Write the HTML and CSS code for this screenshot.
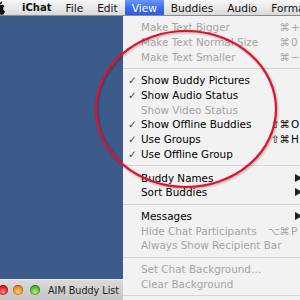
FILE: index.html
```html
<!DOCTYPE html>
<html lang="en">

<head>
    <meta charset="UTF-8">
    <title>iChat View Menu</title>
    <link rel="stylesheet" href="styles.css">
</head>

<body>
    <div class="screen">

        <!-- Menu bar -->
        <div class="menubar">
            <svg class="apple" width="12" height="14" viewBox="0 0 12 14">
                <path d="M10.2 7.5c0-1.6 1.3-2.4 1.4-2.5-.8-1.1-2-1.3-2.4-1.3-1-.1-2 .6-2.5.6s-1.3-.6-2.2-.6C3.4 3.7 2.3 4.4 1.7 5.4.5 7.5 1.4 10.6 2.6 12.3c.6.8 1.2 1.7 2.1 1.7.8 0 1.2-.5 2.2-.5s1.3.5 2.2.5c.9 0 1.5-.8 2-1.7.6-.9.9-1.8.9-1.900 0 0-1.700-.7-1.800-2.900z" fill="#111"/>
                <path d="M8.6 2.6c.5-.6.8-1.3.7-2.1-.7 0-1.4.4-1.9 1-.4.5-.8 1.3-.7 2 .7.1 1.4-.3 1.9-.9z" fill="#111"/>
            </svg>
            <span class="menu-title app">iChat</span>
            <span class="menu-title">File</span>
            <span class="menu-title">Edit</span>
            <span class="menu-title active">View</span>
            <span class="menu-title">Buddies</span>
            <span class="menu-title">Audio</span>
            <span class="menu-title">Format</span>
        </div>

        <div class="desk">
            <!-- Buddy list window behind the menu -->
            <div class="window">
                <div class="buddies"></div>
                <div class="titlebar">
                    <span class="light red"></span>
                    <span class="light orange"></span>
                    <span class="light green"></span>
                    <span class="window-title">AIM Buddy List</span>
                </div>
            </div>

            <!-- View menu -->
            <div class="menu">
                <div class="item off"><span class="check"></span><span class="label">Make Text Bigger</span><span class="mods">⌘</span><span class="key">+</span></div>
                <div class="item off"><span class="check"></span><span class="label">Make Text Normal Size</span><span class="mods">⌘</span><span class="key">0</span></div>
                <div class="item off"><span class="check"></span><span class="label">Make Text Smaller</span><span class="mods">⌘</span><span class="key">−</span></div>
                <div class="sep"></div>
                <div class="item"><span class="check">✓</span><span class="label">Show Buddy Pictures</span></div>
                <div class="item"><span class="check">✓</span><span class="label">Show Audio Status</span></div>
                <div class="item off"><span class="check"></span><span class="label">Show Video Status</span></div>
                <div class="item"><span class="check">✓</span><span class="label">Show Offline Buddies</span><span class="mods">⇧⌘</span><span class="key">O</span></div>
                <div class="item"><span class="check">✓</span><span class="label">Use Groups</span><span class="mods">⇧⌘</span><span class="key">H</span></div>
                <div class="item"><span class="check">✓</span><span class="label">Use Offline Group</span></div>
                <div class="sep"></div>
                <div class="item"><span class="check"></span><span class="label">Buddy Names</span><span class="key"><i class="arrow"></i></span></div>
                <div class="item"><span class="check"></span><span class="label">Sort Buddies</span><span class="key"><i class="arrow"></i></span></div>
                <div class="sep"></div>
                <div class="item"><span class="check"></span><span class="label">Messages</span><span class="key"><i class="arrow"></i></span></div>
                <div class="item off"><span class="check"></span><span class="label">Hide Chat Participants</span><span class="mods">⌥⌘</span><span class="key">P</span></div>
                <div class="item off"><span class="check"></span><span class="label">Always Show Recipient Bar</span></div>
                <div class="sep"></div>
                <div class="item off"><span class="check"></span><span class="label">Set Chat Background…</span></div>
                <div class="item off"><span class="check"></span><span class="label">Clear Background</span></div>
                <div class="sep"></div>
            </div>
        </div>

        <!-- hand drawn red circle -->
        <svg class="mark" width="300" height="300" viewBox="0 0 300 300">
            <ellipse cx="186" cy="109" rx="90" ry="78" fill="none" stroke="#e3112c" stroke-width="2.2"/>
        </svg>
    </div>
</body>

</html>
```

FILE: styles.css
```css
/* Basic Reset */
body {
    margin: 0;
    padding: 0;
    font-family: 'DejaVu Sans', 'Noto Sans', sans-serif;
    font-size: 10.4px;
}

.screen {
    position: relative;
    width: 300px;
    height: 300px;
    overflow: hidden;
    display: flex;
    flex-direction: column;
}

/* Menu bar */
.menubar {
    height: 15px;
    flex: none;
    display: flex;
    align-items: stretch;
    background: linear-gradient(#f7f7f7, #e6e6e6 60%, #d9d9d9);
    border-bottom: 1px solid #8c8c8c;
    color: #111;
    white-space: nowrap;
    font-size: 10.6px;
}

.menubar > * {
    flex: none;
}

.apple {
    margin-left: -7px;
    margin-right: 10px;
    align-self: center;
}

.menu-title {
    display: flex;
    align-items: center;
    padding: 0 7px;
}

.menu-title.app {
    font-weight: bold;
    font-size: 10px;
}

.menu-title.active {
    background: linear-gradient(#6b95f6, #3a6cf2 55%, #2a5de8);
    color: #fff;
}

/* Area under the menu bar */
.desk {
    flex: 1;
    display: flex;
    overflow: hidden;
}

.window {
    width: 123px;
    flex: none;
    display: flex;
    flex-direction: column;
}

.buddies {
    flex: 1;
    background: #3d5b8a;
}

.titlebar {
    height: 21px;
    display: flex;
    align-items: center;
    background: linear-gradient(#dadada, #c4c4c4);
    border-top: 1px solid #e8e8e8;
    box-sizing: border-box;
    overflow: hidden;
}

.light {
    width: 10px;
    height: 10px;
    border-radius: 50%;
    flex: none;
    box-shadow: inset 0 0 0 1px rgba(0, 0, 0, 0.25);
}

.light.red {
    margin-left: -2px;
    background: radial-gradient(circle at 50% 70%, #ff8a8a, #e11b1b 60%, #a00);
}

.light.orange {
    margin-left: 5px;
    background: radial-gradient(circle at 50% 70%, #ffd27a, #f08a12 60%, #b35a00);
}

.light.green {
    margin-left: 7px;
    background: radial-gradient(circle at 50% 70%, #b8f28a, #4cb52a 60%, #2a7a10);
}

.window-title {
    margin-left: 8px;
    color: #222;
    white-space: nowrap;
    font-size: 9.6px;
}

/* Dropdown menu */
.menu {
    width: 197px;
    flex: none;
    background: rgba(242, 242, 242, 0.97);
    padding-top: 4px;
    box-sizing: border-box;
    color: #000;
}

.item {
    height: 14.7px;
    display: flex;
    align-items: center;
    padding-right: 17px;
    white-space: nowrap;
}

.item.off {
    color: #a4a4a4;
}

.check {
    width: 13px;
    padding-left: 5px;
    color: #444;
    font-size: 10.5px;
}

.label {
    flex: 1;
}

.mods {
    text-align: right;
}

.key {
    width: 12px;
    padding-left: 1px;
}

.arrow {
    display: block;
    margin-left: 4px;
    width: 0;
    height: 0;
    border-left: 7px solid #222;
    border-top: 4px solid transparent;
    border-bottom: 4px solid transparent;
}

.sep {
    height: 9px;
    display: flex;
    align-items: center;
}

.sep::after {
    content: "";
    flex: 1;
    height: 1px;
    background: #d6d6d6;
}

/* red circle drawn over the screenshot */
.mark {
    position: absolute;
    top: 0;
    left: 0;
    pointer-events: none;
    filter: drop-shadow(1px 1px 1px rgba(0, 0, 0, 0.3));
}
```
